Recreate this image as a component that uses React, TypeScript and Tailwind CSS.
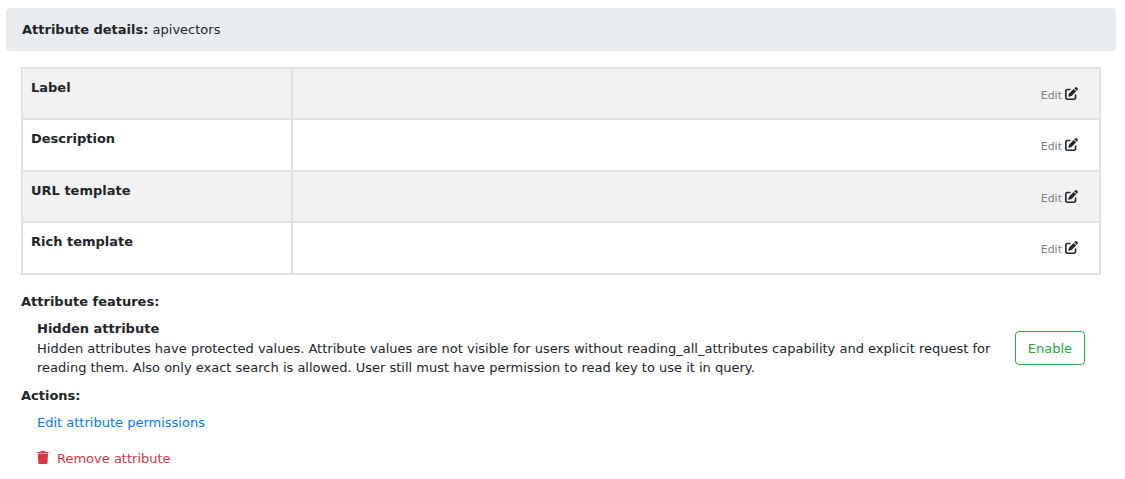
import React from "react";
import { FaPenToSquare } from "react-icons/fa6";

const rows = ["Label", "Description", "URL template", "Rich template"];

function TrashIcon() {
  return (
    <svg viewBox="0 0 12 14" aria-hidden="true" className="h-[14px] w-3 fill-current">
      <path d="M3.6.6Q3.8 0 4.4 0h2.9q.6 0 .8.6l.2.4h2.9q.5 0 .5.5v.6H.2v-.6Q.2 1 .7 1h2.7z" />
      <path d="M.8 2.6h10.2l-.5 9.3q-.1 1.1-1.2 1.1H2.5q-1.1 0-1.2-1.1z" />
    </svg>
  );
}

export default function App() {
  return (
    <main className="px-[6px] pt-2 font-['DejaVu_Sans',sans-serif] text-[13px] leading-normal text-[#212529]">
      <header className="mr-[3px] rounded bg-[#e9ecef] px-4 pt-3 pb-[11px]">
        <h1>
          <strong className="font-bold">Attribute details:</strong> apivectors
        </h1>
      </header>
      <div className="mt-4 pr-[18px] pl-[15px]">
        <table className="w-full table-fixed border-collapse border-2 border-[#dee2e6]">
          <tbody>
            {rows.map((label) => (
              <tr key={label} className="odd:bg-[#f2f2f2]">
                <th scope="row" className="w-1/4 border-2 border-[#dee2e6] px-2 pt-[9px] text-left align-top font-bold">
                  {label}
                </th>
                <td className="border-2 border-[#dee2e6] px-[21px] pt-4 pb-[14px] text-right">
                  <button type="button" className="align-top">
                    <span className="mr-[3px] text-[11px] text-[#808080]">Edit</span>
                    <FaPenToSquare aria-hidden="true" className="inline size-[13px] align-[-1px]" />
                  </button>
                </td>
              </tr>
            ))}
          </tbody>
        </table>
        <h2 className="mt-[17px] font-bold">Attribute features:</h2>
        <section className="mt-2 flex items-center justify-between gap-4 px-4">
          <div>
            <h3 className="font-bold">Hidden attribute</h3>
            <p>
              Hidden attributes have protected values. Attribute values are not visible for users without
              reading_all_attributes capability and explicit request for reading them. Also only exact search is
              allowed. User still must have permission to read key to use it in query.
            </p>
          </div>
          <button type="button" className="h-[34px] shrink-0 rounded border border-[#28a745] px-3 text-[#28a745]">
            Enable
          </button>
        </section>
        <h2 className="mt-2 font-bold">Actions:</h2>
        <div className="mt-2 flex flex-col items-start gap-4 px-4">
          <a href="#permissions" className="text-[#007bff]">
            Edit attribute permissions
          </a>
          <button type="button" className="flex items-center gap-2 text-[#dc3545]">
            <TrashIcon />
            Remove attribute
          </button>
        </div>
      </div>
    </main>
  );
}
